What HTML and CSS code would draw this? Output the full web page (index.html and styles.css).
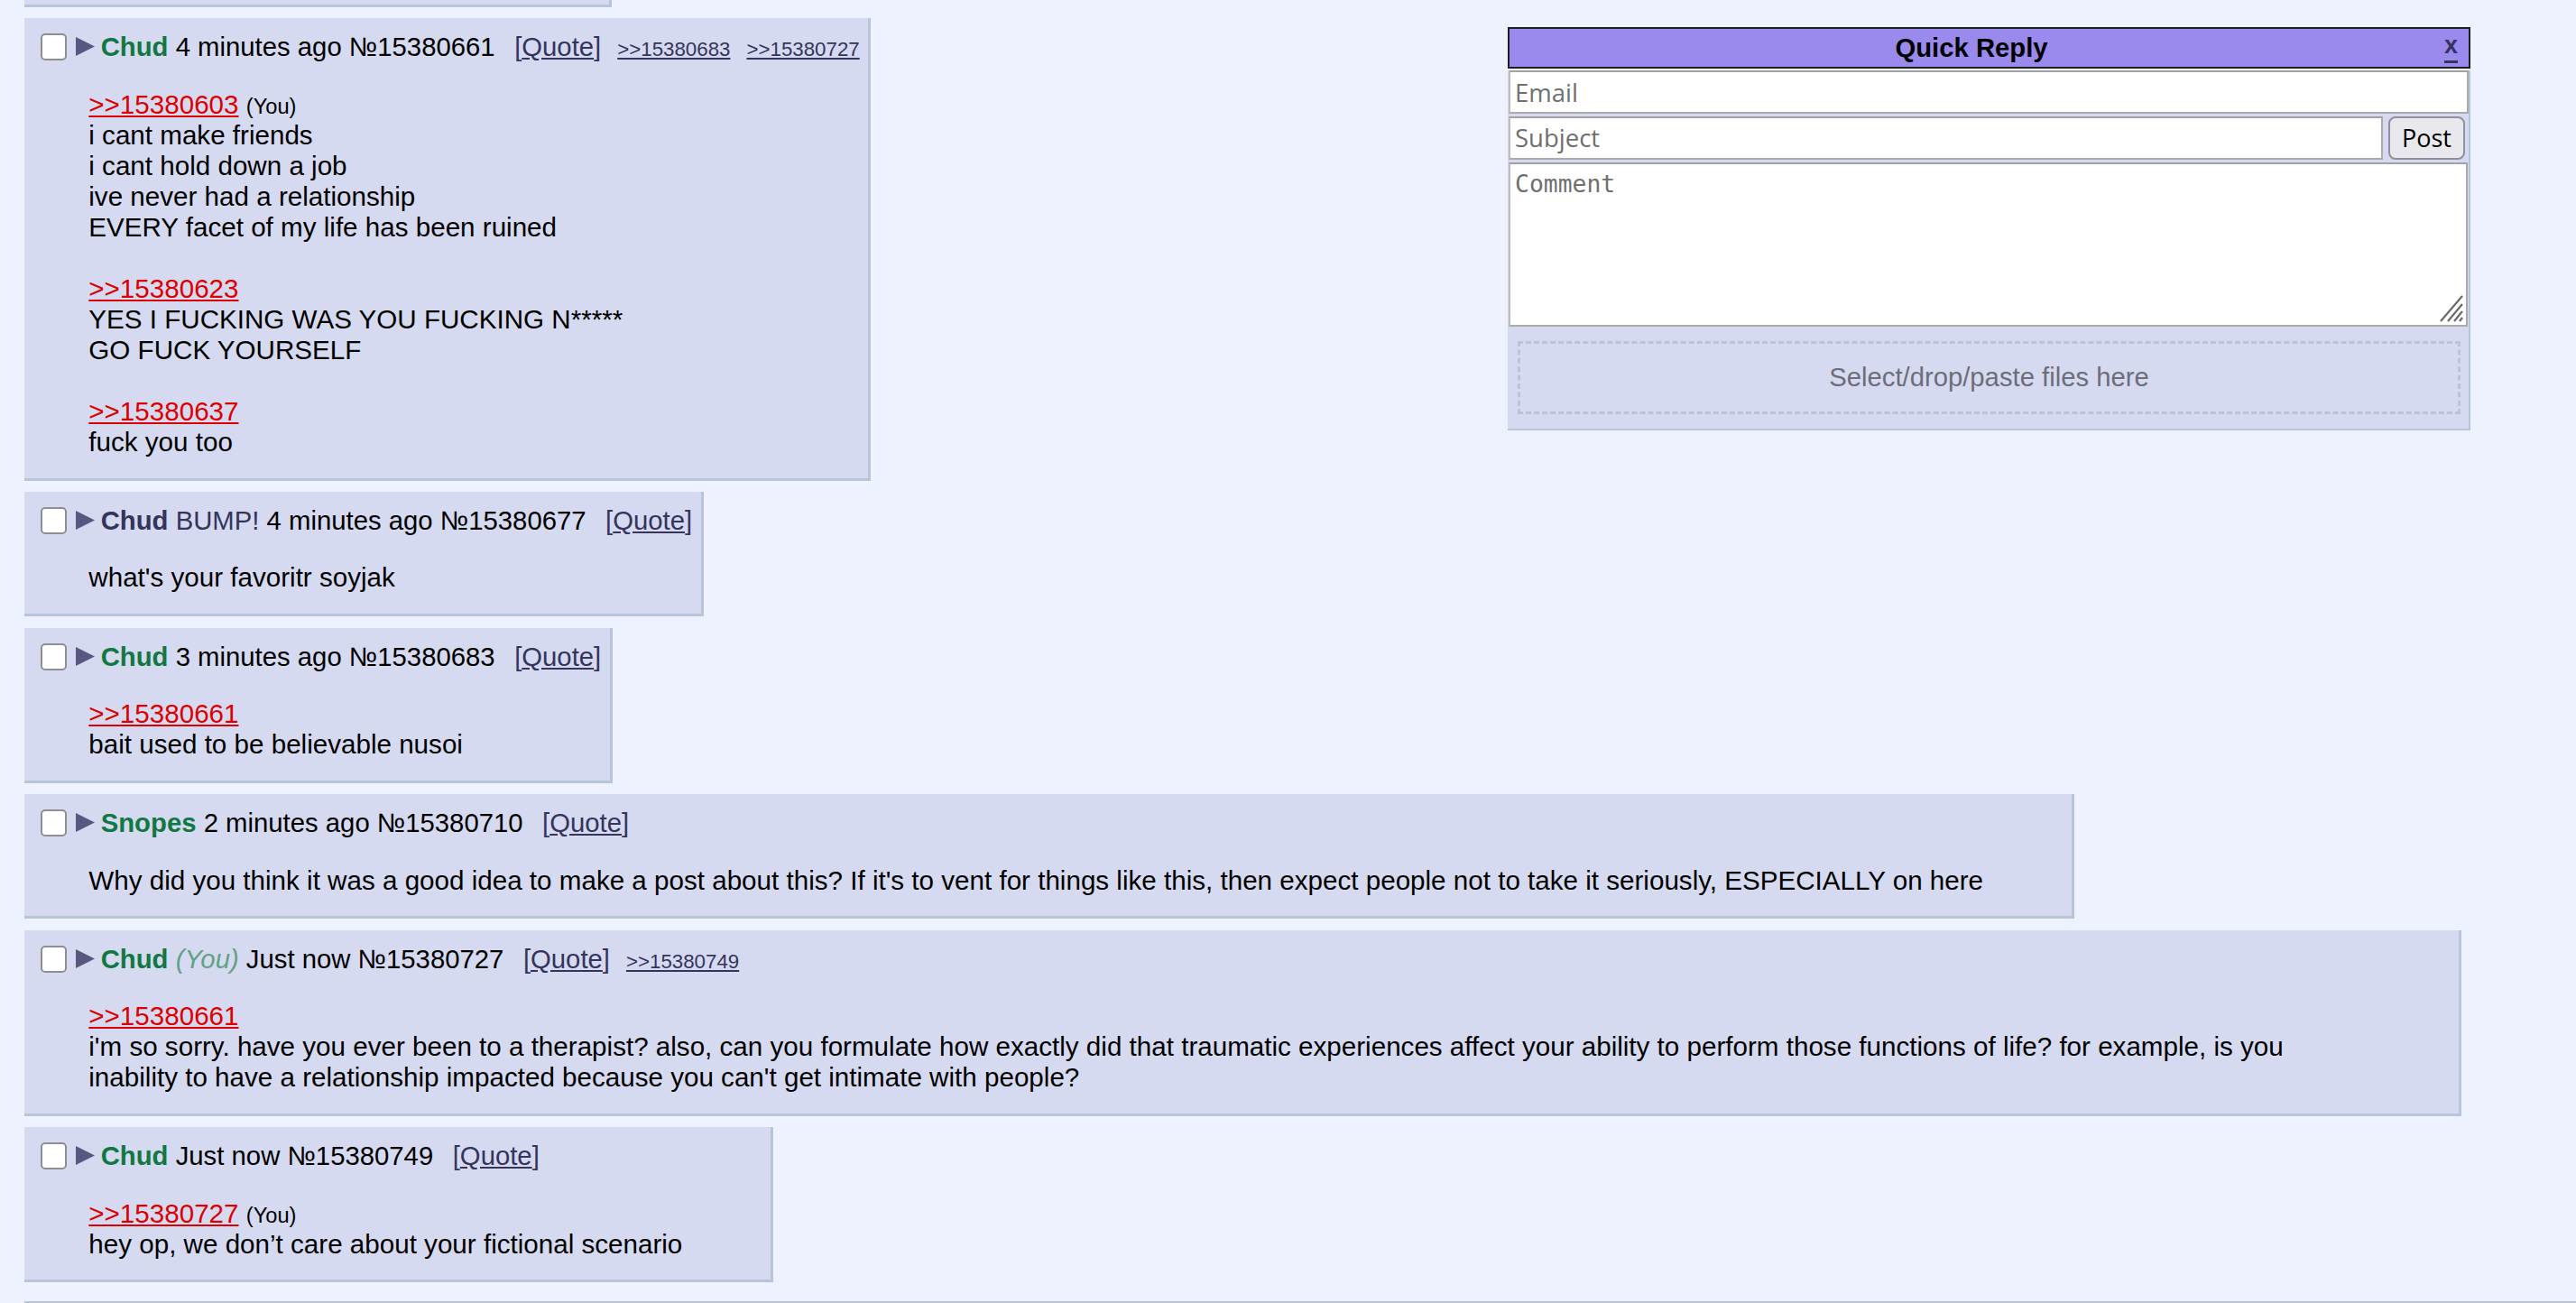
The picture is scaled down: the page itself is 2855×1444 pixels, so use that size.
FILE: index.html
```html
<!DOCTYPE html>
<html>
<head>
<meta charset="utf-8">
<title>Thread</title>
<link rel="stylesheet" href="styles.css">
</head>
<body>
<div class="thread">
  <div class="post stub"></div>

  <div class="post">
    <div class="hdr"><span class="cb"></span><svg class="tri" viewBox="0 0 21 21"><polygon points="0,0 21,10.5 0,21"/></svg><span class="name">Chud</span> 4 minutes ago №15380661<span class="qt">[<a>Quote</a>]</span><a class="bl">&gt;&gt;15380683</a><a class="bl">&gt;&gt;15380727</a></div>
    <div class="body"><a class="ql">&gt;&gt;15380603</a> <span class="you">(You)</span><br>i cant make friends<br>i cant hold down a job<br>ive never had a relationship<br>EVERY facet of my life has been ruined<br><br><a class="ql">&gt;&gt;15380623</a><br>YES I FUCKING WAS YOU FUCKING N*****<br>GO FUCK YOURSELF<br><br><a class="ql">&gt;&gt;15380637</a><br>fuck you too</div>
  </div>

  <div class="post">
    <div class="hdr"><span class="cb"></span><svg class="tri" viewBox="0 0 21 21"><polygon points="0,0 21,10.5 0,21"/></svg><span class="name mail">Chud</span> <span class="mailtxt">BUMP!</span> 4 minutes ago №15380677<span class="qt">[<a>Quote</a>]</span></div>
    <div class="body">what's your favoritr soyjak</div>
  </div>

  <div class="post">
    <div class="hdr"><span class="cb"></span><svg class="tri" viewBox="0 0 21 21"><polygon points="0,0 21,10.5 0,21"/></svg><span class="name">Chud</span> 3 minutes ago №15380683<span class="qt">[<a>Quote</a>]</span></div>
    <div class="body"><a class="ql">&gt;&gt;15380661</a><br>bait used to be believable nusoi</div>
  </div>

  <div class="post">
    <div class="hdr"><span class="cb"></span><svg class="tri" viewBox="0 0 21 21"><polygon points="0,0 21,10.5 0,21"/></svg><span class="name">Snopes</span> 2 minutes ago №15380710<span class="qt">[<a>Quote</a>]</span></div>
    <div class="body">Why did you think it was a good idea to make a post about this? If it's to vent for things like this, then expect people not to take it seriously, ESPECIALLY on here</div>
  </div>

  <div class="post">
    <div class="hdr"><span class="cb"></span><svg class="tri" viewBox="0 0 21 21"><polygon points="0,0 21,10.5 0,21"/></svg><span class="name">Chud</span> <span class="hyou">(You)</span> Just now №15380727<span class="qt">[<a>Quote</a>]</span><a class="bl">&gt;&gt;15380749</a></div>
    <div class="body"><a class="ql">&gt;&gt;15380661</a><br>i'm so sorry. have you ever been to a therapist? also, can you formulate how exactly did that traumatic experiences affect your ability to perform those functions of life? for example, is you inability to have a relationship impacted because you can't get intimate with people?</div>
  </div>

  <div class="post">
    <div class="hdr"><span class="cb"></span><svg class="tri" viewBox="0 0 21 21"><polygon points="0,0 21,10.5 0,21"/></svg><span class="name">Chud</span> Just now №15380749<span class="qt">[<a>Quote</a>]</span></div>
    <div class="body"><a class="ql">&gt;&gt;15380727</a> <span class="you">(You)</span><br>hey op, we don’t care about your fictional scenario</div>
  </div>

  <div class="rule"></div>
</div>

<div class="qr">
  <div class="qr-head">
    <div class="qr-title">Quick Reply</div>
    <div class="qr-close"><span class="x">x</span></div>
  </div>
  <div class="qr-form">
    <input class="fld email" type="text" placeholder="Email">
    <div class="qr-row">
      <input class="fld subject" type="text" placeholder="Subject">
      <button class="post-btn" type="button">Post</button>
    </div>
    <div class="ta-wrap">
      <textarea class="comment" placeholder="Comment"></textarea>
      <svg class="grip" viewBox="0 0 32 32"><line x1="6" y1="30" x2="30" y2="2"/><line x1="14" y1="30" x2="30" y2="11"/><line x1="21" y1="30" x2="30" y2="19"/><line x1="27" y1="30" x2="30" y2="26"/></svg>
    </div>
    <div class="drop">
      <div class="drop-box">Select/drop/paste files here</div>
    </div>
  </div>
</div>
</body>
</html>
```
FILE: styles.css
```css
html, body {
  margin: 0;
  padding: 0;
}

body {
  background: #EEF2FF;
  font-family: "Liberation Sans", Arial, sans-serif;
  font-size: 29.6px;
  line-height: 34px;
  color: #000;
  overflow: hidden;
  width: 2855px;
  height: 1444px;
  position: relative;
}

a {
  color: #34345C;
  text-decoration: underline;
  cursor: pointer;
}

.thread {
  padding-left: 27px;
  display: flex;
  flex-direction: column;
  align-items: flex-start;
  gap: 12.4px;
}

.post {
  background: #D6DAF0;
  border-right: 3px solid #B7C5D9;
  border-bottom: 3px solid #B7C5D9;
  padding: 15px 9.5px 22.8px 9px;
  box-sizing: border-box;
  max-width: 2701px;
}

.post.stub {
  width: 651px;
  height: 8px;
  padding: 0;
}

.hdr {
  white-space: nowrap;
  font-size: 29.3px;
}

.cb {
  display: inline-block;
  box-sizing: border-box;
  width: 29.3px;
  height: 30px;
  border: 2px solid #8e8e96;
  border-radius: 5px;
  background: #fff;
  vertical-align: -5px;
  margin: 0 9.7px 0 9px;
}

.tri {
  width: 21px;
  height: 21px;
  vertical-align: baseline;
  margin-right: 6.7px;
  fill: #575780;
}

.name {
  color: #117743;
  font-weight: bold;
}

.name.mail,
.mailtxt {
  color: #34345C;
}

.hyou {
  color: #5FA384;
  font-style: italic;
}

.qt {
  margin-left: 21.5px;
  color: #34345C;
}

.bl {
  font-size: 22.3px;
  line-height: 20px;
  margin-left: 18px;
}

.body {
  margin: 29.4px 0 0 62.3px;
  padding-right: 88.5px;
}

.ql {
  color: #DD0000;
}

.you {
  font-size: 0.8em;
  line-height: 20px;
}

.rule {
  align-self: stretch;
  margin-top: 8.4px;
  border-top: 3px solid #B7C5D9;
}

/* Quick reply */
.qr {
  position: absolute;
  left: 1671px;
  top: 30px;
  width: 1067px;
}

.qr-head {
  display: flex;
  height: 46px;
  box-sizing: border-box;
  border: 2px solid #1e1e1e;
  background: #9A8AEE;
}

.qr-title {
  flex: 1;
  text-align: center;
  font-weight: bold;
  font-size: 29.25px;
  line-height: 34px;
  padding-top: 3.8px;
}

.qr-close {
  width: 39px;
  text-align: center;
}

.x {
  display: inline-block;
  margin-top: 5px;
  font-weight: bold;
  font-size: 27px;
  line-height: 25px;
  padding-bottom: 4px;
  border-bottom: 3px solid #34345C;
  color: #34345C;
}

.qr-form {
  background: #D6DAF0;
  border-right: 2px solid #B7C5D9;
  border-bottom: 2px solid #B7C5D9;
  padding-left: 1px;
}

.fld {
  display: block;
  box-sizing: border-box;
  height: 48px;
  margin: 0;
  border: 2px solid #ababab;
  border-top-color: #a2a2a2;
  border-left-color: #bdbdbd;
  background: #fff;
  padding: 0 5px;
  font-family: "Open Sans", "Liberation Sans", sans-serif;
  font-size: 27.5px;
  outline: none;
}

.fld::placeholder {
  color: #6f6f6f;
}

.email {
  width: 1064px;
  margin-top: 2.3px;
}

.qr-row {
  display: flex;
  align-items: flex-start;
  gap: 6px;
  margin-top: 2.3px;
}

.subject {
  width: 969px;
}

.post-btn {
  box-sizing: border-box;
  width: 85px;
  height: 48.4px;
  margin: 0;
  padding: 0;
  background: #E9E9ED;
  border: 2px solid #8F8F9D;
  border-radius: 8px;
  font-family: "Open Sans", "Liberation Sans", sans-serif;
  font-size: 27px;
  color: #000;
}

.ta-wrap {
  position: relative;
  width: 1063px;
  height: 182px;
  margin-top: 2.6px;
}

.comment {
  display: block;
  box-sizing: border-box;
  width: 100%;
  height: 100%;
  margin: 0;
  border: 2px solid #ababab;
  border-top-color: #a2a2a2;
  border-left-color: #bdbdbd;
  padding: 6px 5px;
  font-family: "DejaVu Sans Mono", monospace;
  font-size: 26.4px;
  resize: none;
  outline: none;
}

.comment::placeholder {
  color: #6f6f6f;
}

.grip {
  position: absolute;
  right: 4px;
  bottom: 4px;
  width: 32px;
  height: 32px;
  stroke: #6a6a6a;
  stroke-width: 2.2;
}

.drop {
  padding: 16.7px 9px 16px 10px;
}

.drop-box {
  box-sizing: border-box;
  height: 80.3px;
  border: 3px dashed #BEC2D7;
  display: flex;
  align-items: center;
  justify-content: center;
  color: #6d6d7a;
  font-size: 29.25px;
  line-height: 34px;
}
```
